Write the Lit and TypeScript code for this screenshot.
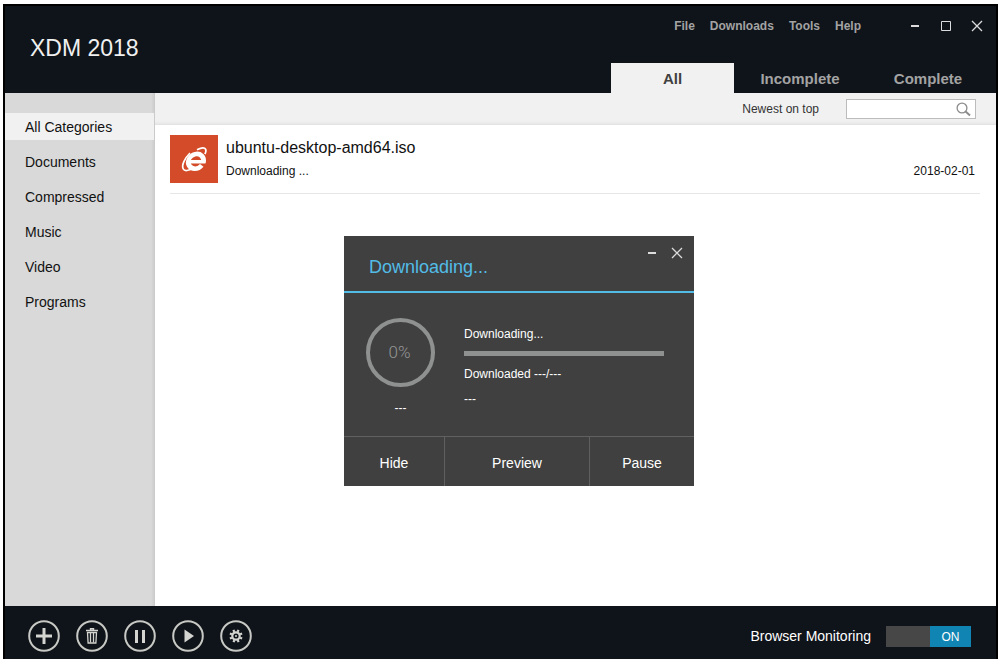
import { LitElement, html, css, svg } from "lit";
import { customElement, property, state } from "lit/decorators.js";
import { classMap } from "lit/directives/class-map.js";

const reset = css`
  *, *::before, *::after { box-sizing: border-box; }
  button, input {
    appearance: none;
    margin: 0;
    padding: 0;
    border: 0;
    border-radius: 0;
    background: none;
    color: inherit;
    font: inherit;
  }
  button { cursor: pointer; }
  svg { display: block; }
`;

const minimizeIcon = html`<svg width="12" height="12" viewBox="0 0 12 12" aria-hidden="true">
  <path d="M2 5h8v2H2z" fill="#dcdcdc" />
</svg>`;
const maximizeIcon = html`<svg width="12" height="12" viewBox="0 0 12 12" aria-hidden="true">
  <path d="M1.5 1.5h9v9h-9z" fill="none" stroke="#dcdcdc" />
</svg>`;
const closeIcon = html`<svg width="12" height="12" viewBox="0 0 12 12" aria-hidden="true">
  <path d="M1 1l10 10M11 1L1 11" fill="none" stroke="#dcdcdc" stroke-width="1.3" />
</svg>`;

const gearTeeth = [0, 45, 90, 135, 180, 225, 270, 315];
const actions = [
  { label: "Add download", glyph: svg`<path d="M16 8v16M8 16h16" stroke="#d4d4d0" stroke-width="3" />` },
  {
    label: "Delete",
    glyph: svg`<path d="M10 10.500h12M14.500 10V8.700h3V10" fill="none" stroke="#d4d4d0" stroke-width="1.400" />
      <path d="M11.500 12.500h9l-.6 10.500h-7.800z" fill="none" stroke="#d4d4d0" stroke-width="1.300" />
      <path d="M14.500 12.500v10M17.500 12.500v10" stroke="#d4d4d0" stroke-width="1.300" />`,
  },
  { label: "Pause", glyph: svg`<path d="M11 10h3v13h-3zM18 10h3v13h-3z" fill="#d4d4d0" />` },
  { label: "Resume", glyph: svg`<path d="M12.5 9.5l9.5 6.5-9.5 6.5z" fill="#d4d4d0" />` },
  {
    label: "Settings",
    glyph: svg`<circle cx="16" cy="16" r="3.7" fill="none" stroke="#d4d4d0" stroke-width="2.2" />
      <circle cx="16" cy="16" r="1" fill="#d4d4d0" />
      ${gearTeeth.map((a) => svg`<path d="M16 11.6V9.4" stroke="#d4d4d0" stroke-width="2.2" transform="rotate(${a + 22} 16 16)" />`)}`,
  },
];

@customElement("progress-dialog")
export class ProgressDialog extends LitElement {
  @property({ type: Number }) percent = 0;

  static styles = [
    reset,
    css`
      :host {
        display: flex;
        flex-direction: column;
        background: #404040;
        color: #fff;
        font-size: 12px;
        line-height: 16px;
      }
      .head {
        display: flex;
        justify-content: space-between;
        align-items: flex-start;
        padding: 11px 11px 13px 25px;
        border-bottom: 2px solid #52bce6;
      }
      .title {
        margin: 0;
        padding-top: 9px;
        color: #52bce6;
        font-size: 18px;
        font-weight: 400;
        line-height: 22px;
      }
      .controls { display: flex; gap: 13px; }
      .body {
        display: flex;
        gap: 29px;
        padding: 25px 30px 20px 22px;
      }
      .gauge {
        display: flex;
        flex-direction: column;
        align-items: center;
        gap: 13px;
        width: 69px;
      }
      .ring {
        display: grid;
        place-items: center;
        width: 69px;
        height: 69px;
        padding: 0 2px 2px 0;
        border: 4px solid #8f9190;
        border-radius: 50%;
        color: #969696;
        font-family: Roboto, "Liberation Sans", sans-serif;
        font-size: 17px;
        font-weight: 300;
      }
      .info { flex: 1; }
      .line { margin: 0; padding: 8px 0; }
      .line + .line { padding-top: 1px; }
      .bar { height: 5px; margin: 1px 0 2px; background: #8f9190; }
      .fill { height: 100%; background: #52bce6; }
      .foot {
        display: grid;
        grid-template-columns: 20fr 29fr 21fr;
        border-top: 1px solid #606060;
      }
      .choice { height: 49px; padding-top: 2px; font-size: 14px; }
      .choice + .choice { border-left: 1px solid #606060; }
    `,
  ];

  render() {
    return html`
      <header class="head">
        <h2 class="title">Downloading...</h2>
        <div class="controls">
          <button aria-label="Minimize">${minimizeIcon}</button>
          <button aria-label="Close">${closeIcon}</button>
        </div>
      </header>
      <div class="body">
        <div class="gauge">
          <div class="ring">${this.percent}%</div>
          <span>---</span>
        </div>
        <div class="info">
          <p class="line">Downloading...</p>
          <div class="bar" role="progressbar" aria-label="Progress" aria-valuenow=${this.percent}>
            <div class="fill" style="width: ${this.percent}%"></div>
          </div>
          <p class="line">Downloaded ---/---</p>
          <p class="line">---</p>
        </div>
      </div>
      <footer class="foot">
        ${["Hide", "Preview", "Pause"].map((t) => html`<button class="choice">${t}</button>`)}
      </footer>
    `;
  }
}

@customElement("app-root")
export class AppRoot extends LitElement {
  @state() private category = "All Categories";
  @state() private tab = "All";

  static styles = [
    reset,
    css`
      :host {
        display: flex;
        min-height: 100vh;
        box-sizing: border-box;
        padding: 4px 4px 9px 3px;
        background: #fff;
        color: #111;
        font-family: "Liberation Sans", Arial, sans-serif;
        font-size: 12px;
        line-height: 16px;
      }
      .window {
        position: relative;
        display: flex;
        flex: 1;
        flex-direction: column;
        border: 2px solid #000;
        border-bottom: 0;
      }
      .head {
        display: flex;
        justify-content: space-between;
        background: #0f141a;
        color: #a3a3a3;
      }
      .brand {
        margin: 0;
        padding: 28px 0 0 25px;
        color: #f0f0f0;
        font-size: 23px;
        font-weight: 400;
        line-height: 28px;
      }
      .side {
        display: flex;
        flex-direction: column;
        align-items: flex-end;
        gap: 29px;
        padding-top: 12px;
      }
      .top { display: flex; align-items: center; padding-right: 13px; }
      .menu { display: flex; gap: 15px; font-weight: 700; }
      .controls { display: flex; gap: 19px; margin-left: 48px; }
      .tabs {
        display: grid;
        grid-template-columns: 123px 132px 124px;
        padding-right: 6px;
      }
      .tab { height: 30px; padding-top: 2px; font-size: 15px; font-weight: 700; }
      .tab.active { background: #f1f1f1; color: #404040; }
      .middle { display: flex; flex: 1; }
      .categories {
        display: flex;
        flex-direction: column;
        gap: 8px;
        width: 150px;
        padding: 20px 1px 20px 0;
        background: linear-gradient(to left, #c8c8c8, #d2d2d2 2px, #d9d9d9 4px);
        font-size: 14px;
      }
      .category { height: 27px; padding-left: 20px; text-align: left; }
      .category.active { background: #f1f1f1; }
      .content { flex: 1; min-width: 0; }
      .toolbar {
        display: flex;
        justify-content: flex-end;
        align-items: center;
        gap: 27px;
        height: 32px;
        padding-right: 20px;
        background: linear-gradient(to top, #e0e0e0, #ececec 2px, #f1f1f1 5px);
        color: #333;
      }
      .search {
        display: flex;
        align-items: center;
        width: 130px;
        height: 20px;
        padding-right: 4px;
        border: 1px solid #bcbcbc;
        background: #fff;
      }
      .query { flex: 1; min-width: 0; height: 18px; padding-left: 4px; outline: none; }
      .list { margin: 0; padding: 10px 16px 0 15px; list-style: none; }
      .item {
        display: flex;
        gap: 8px;
        padding: 0 5px 10px 0;
        border-bottom: 1px solid #e6e6e6;
      }
      .details { flex: 1; padding-top: 3px; }
      .name { font-size: 16px; line-height: 20px; }
      .row { display: flex; justify-content: space-between; padding-top: 5px; }
      .dialog { position: absolute; top: 230px; left: 339px; width: 350px; }
      .foot {
        display: flex;
        justify-content: space-between;
        align-items: center;
        height: 53px;
        padding: 7px 25px 0 23px;
        background: #0f141a;
        color: #fff;
      }
      .actions { display: flex; gap: 16px; }
      .monitor { display: flex; align-items: center; gap: 15px; font-size: 14px; }
      .switch {
        display: grid;
        grid-template-columns: 44px 41px;
        width: 85px;
        height: 21px;
        background: #474747;
      }
      .check { cursor: pointer; }
      .on {
        padding-top: 3px;
        background: #1085b3;
        font-size: 12px;
        text-align: center;
      }
    `,
  ];

  render() {
    return html`
      <div class="window">
        <header class="head">
          <h1 class="brand">XDM 2018</h1>
          <div class="side">
            <div class="top">
              <nav class="menu">
                ${["File", "Downloads", "Tools", "Help"].map((m) => html`<button>${m}</button>`)}
              </nav>
              <div class="controls">
                <button aria-label="Minimize">${minimizeIcon}</button>
                <button aria-label="Maximize">${maximizeIcon}</button>
                <button aria-label="Close">${closeIcon}</button>
              </div>
            </div>
            <div class="tabs">
              ${["All", "Incomplete", "Complete"].map(
                (t) => html`<button
                  class=${classMap({ tab: true, active: t === this.tab })}
                  @click=${() => (this.tab = t)}
                >${t}</button>`
              )}
            </div>
          </div>
        </header>
        <div class="middle">
          <nav class="categories">
            ${["All Categories", "Documents", "Compressed", "Music", "Video", "Programs"].map(
              (c) => html`<button
                class=${classMap({ category: true, active: c === this.category })}
                @click=${() => (this.category = c)}
              >${c}</button>`
            )}
          </nav>
          <main class="content">
            <div class="toolbar">
              <button>Newest on top</button>
              <div class="search">
                <input class="query" type="text" aria-label="Search" />
                <button aria-label="Find">
                  <svg width="15" height="15" viewBox="0 0 15 15" fill="none" stroke="#8c8c8c" aria-hidden="true">
                    <circle cx="6" cy="6" r="4.9" stroke-width="1.3" />
                    <path d="M9.6 9.6l4.4 4" stroke-width="2" />
                  </svg>
                </button>
              </div>
            </div>
            <ul class="list">
              <li class="item">
                <svg width="48" height="48" viewBox="0 0 48 48" fill="none" stroke="#fff" aria-hidden="true">
                  <rect width="48" height="48" fill="#d34b28" stroke="none" />
                  <g transform="translate(26 26) skewX(-7)">
                    <path d="M7.500 1.200A7.600 7.400 0 1 0 6.300 4.400" stroke-width="4.600" />
                    <path d="M-7 .8H9.800" stroke-width="3.400" />
                  </g>
                  <path
                    d="M27 14.800c4-2 7.600-2.300 8.600-.6.700 1.200.3 3-.7 5M20 18c-5.500 5.500-8.600 12.400-6.800 15.900 1.300 2.500 5.300 2.100 9.800-.9"
                    stroke-width="1.700"
                  />
                </svg>
                <div class="details">
                  <div class="name">ubuntu-desktop-amd64.iso</div>
                  <div class="row"><span>Downloading ...</span><time>2018-02-01</time></div>
                </div>
              </li>
            </ul>
          </main>
        </div>
        <footer class="foot">
          <div class="actions">
            ${actions.map(
              (a) => html`<button aria-label=${a.label}>
                <svg width="32" height="32" viewBox="0 0 32 32" aria-hidden="true">
                  <circle cx="16" cy="16" r="14.8" fill="none" stroke="#c8c8c4" stroke-width="2" />
                  ${a.glyph}
                </svg>
              </button>`
            )}
          </div>
          <label class="monitor">
            Browser Monitoring
            <span class="switch">
              <input class="check" type="checkbox" checked />
              <span class="on">ON</span>
            </span>
          </label>
        </footer>
        <progress-dialog class="dialog" role="dialog" aria-label="Downloading"></progress-dialog>
      </div>
    `;
  }
}
